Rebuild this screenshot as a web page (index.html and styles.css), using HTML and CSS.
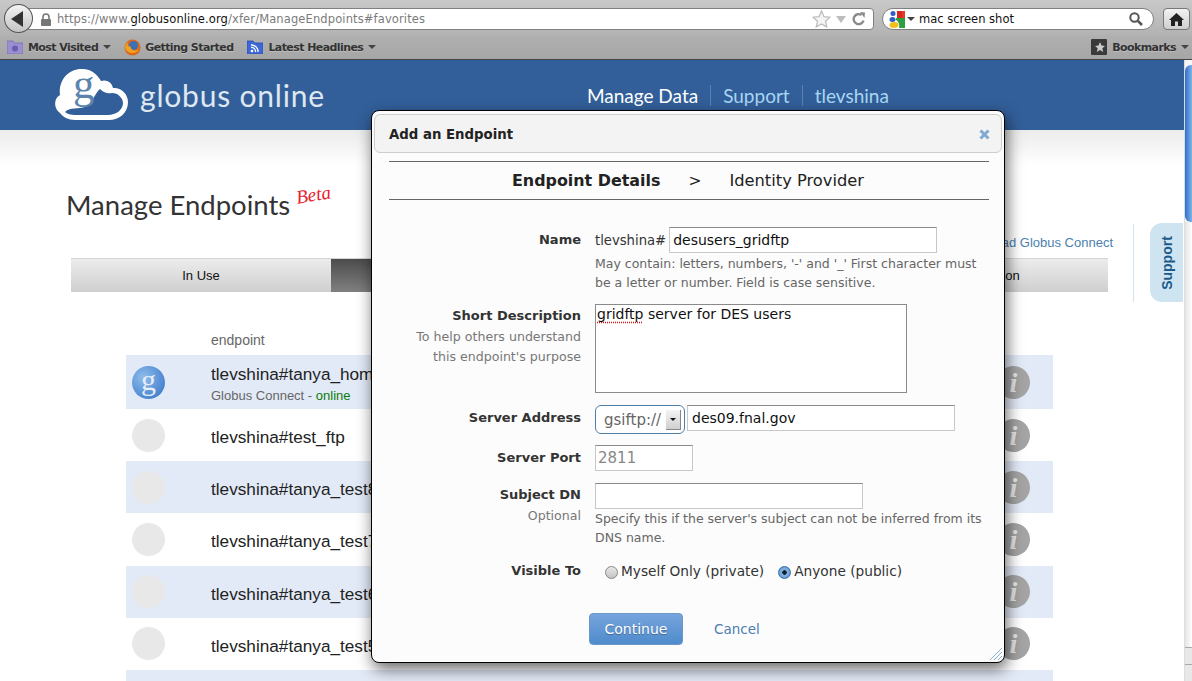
FILE: index.html
```html
<!DOCTYPE html>
<html lang="en">
<head>
    <meta charset="UTF-8">
    <meta name="viewport" content="width=device-width, initial-scale=1.0">
    <title>Manage Endpoints</title>
    <link rel="stylesheet" href="styles.css">
</head>
<body>
    <div class="toolbar">
        <button class="back-button" type="button" aria-label="Back">
            <svg width="16" height="18" viewBox="0 0 16 18"><path d="M14 1 L2 9 L14 17 Z" fill="#333"/></svg>
        </button>
        <div class="url-bar">
            <svg class="lock" width="12" height="13" viewBox="0 0 12 13"><path d="M3 6 V4 a3 3 0 0 1 6 0 V6" fill="none" stroke="#777" stroke-width="1.6"/><rect x="1" y="6" width="10" height="7" rx="1" fill="#777"/></svg>
            <span class="url"><span class="url-dim">https://www.</span>globusonline.org<span class="url-dim">/xfer/ManageEndpoints#favorites</span></span>
            <svg class="url-star" width="19" height="18" viewBox="0 0 19 18"><path d="M9.5 1 L12 6.6 L18 7.2 L13.5 11.2 L14.8 17 L9.5 14 L4.2 17 L5.5 11.2 L1 7.2 L7 6.6 Z" fill="#f4f4f4" stroke="#bbb" stroke-width="1.2"/></svg>
            <span class="url-drop"></span>
            <svg class="reload" width="14" height="14" viewBox="0 0 14 14"><path d="M11.5 8.5 A5 5 0 1 1 9.5 3" fill="none" stroke="#8a8a8a" stroke-width="2.4"/><path d="M8 0 L13 0.5 L12.5 6 Z" fill="#8a8a8a"/></svg>
        </div>
        <div class="search-bar">
            <svg width="16" height="17" viewBox="0 0 16 17"><path d="M8 0 H13 V7 H8 Z" fill="#d6281f"/><path d="M13 0 H16 V7 H13 Z" fill="#e23a2e"/><path d="M7 7 H16 V17 H10 C11 13 9 10 7 9 Z" fill="#2f9e3f"/><circle cx="4" cy="2.5" r="2.5" fill="#2a5fc4"/><ellipse cx="3.5" cy="8.5" rx="3" ry="2.5" fill="#2a5fc4"/><ellipse cx="5" cy="14" rx="4.5" ry="3" fill="#f2c01e"/></svg>
            <span class="caret caret-search"></span>
            <span class="search-text">mac screen shot</span>
            <svg class="magnifier" width="14" height="14" viewBox="0 0 14 14"><circle cx="5.5" cy="5.5" r="4.2" fill="none" stroke="#555" stroke-width="2"/><path d="M8.8 8.8 L13 13" stroke="#555" stroke-width="2.6"/></svg>
        </div>
        <button class="home-button" type="button" aria-label="Home">
            <svg width="15" height="13" viewBox="0 0 15 13"><path d="M7.5 0 L15 7 H13 V13 H9 V8.5 H6 V13 H2 V7 H0 Z" fill="#222"/></svg>
        </button>
    </div>

    <div class="bookmarks">
        <span class="bookmark">
            <svg width="16" height="14" viewBox="0 0 16 14"><path d="M0 1 H6 L7.5 3 H16 V14 H0 Z" fill="#9b8fd0" stroke="#7a6db4" stroke-width=".8"/><circle cx="8" cy="8.5" r="3" fill="#6a5cb0"/></svg>
            Most Visited <span class="caret"></span>
        </span>
        <span class="bookmark bookmark-ff">
            <svg width="17" height="17" viewBox="0 0 17 17"><circle cx="8.5" cy="8.5" r="8" fill="#d9691c"/><circle cx="9.5" cy="6.5" r="4.5" fill="#3d6fb4"/><path d="M1 9 C3 15 12 16 15.5 10 C12 12.5 7 12 6.5 7.5 C4 8 3 7 4 3 C2 4.5 1 6.5 1 9 Z" fill="#f2a21f"/></svg>
            Getting Started
        </span>
        <span class="bookmark bookmark-news">
            <svg width="16" height="14" viewBox="0 0 16 14"><path d="M0 1 H6 L7.5 3 H16 V14 H0 Z" fill="#3e68d8" stroke="#2c4fb0" stroke-width=".8"/><circle cx="5" cy="11" r="1.3" fill="#fff"/><path d="M4 7.5 A4 4 0 0 1 8.5 12 M4 5 A6.5 6.5 0 0 1 11 12" fill="none" stroke="#fff" stroke-width="1.3"/></svg>
            Latest Headlines <span class="caret"></span>
        </span>
        <span class="bookmark bookmark-right">
            <svg width="16" height="16" viewBox="0 0 16 16"><rect width="16" height="16" rx="1" fill="#3a3a3a"/><path d="M9 3 L10.5 6.5 L14 7 L11.3 9.3 L12.2 13 L9 11 L5.8 13 L6.7 9.3 L4 7 L7.5 6.5 Z" fill="#ccc"/></svg>
            Bookmarks <span class="caret"></span>
        </span>
    </div>

    <div class="viewport">
        <div class="page">
            <header class="site-header">
                <a class="logo">
                    <svg class="logo-mark" width="74" height="62" viewBox="0 -8 74 62">
                        <path d="M5 45 C-2 40 -1 30 5 27 C3 12 14 0 28 1 C36 1 42 6 46 13 C51 11 57 14 58 20 C65 19 73 25 73 34 C73 45 64 52 54 52 H20 C13 52 8 49 5 45 Z" fill="#fff"/>
                        <path d="M10 44 C14 39 24 41 30 39 C38 36 39 26 45 21 C49 25 53 26 57 25 C63 25 68 30 68 35 C68 42 61 47 53 47 H20 C16 47 12 46 10 44 Z" fill="#325f9a"/>
                        <text class="logo-g" x="18" y="30">g</text>
                    </svg>
                    <span class="logo-text">globus online</span>
                </a>
                <nav class="site-nav">
                    <a class="nav-link nav-current">Manage Data</a>
                    <a class="nav-link">Support</a>
                    <a class="nav-link">tlevshina</a>
                </nav>
            </header>

            <main class="content">
                <div class="title-row">
                    <h1 class="page-title">Manage Endpoints</h1>
                    <span class="beta">Beta</span>
                    <a class="connect-link">Download Globus Connect</a>
                </div>

                <div class="tabs">
                    <div class="tab tab-first">In Use</div>
                    <div class="tab tab-active"></div>
                    <div class="tab"></div>
                    <div class="tab">Administration</div>
                </div>

                <div class="endpoints">
                    <div class="endpoints-head">endpoint</div>
                    <div class="endpoint endpoint-first">
                        <span class="ep-icon ep-icon-on">g</span>
                        <div class="ep-text">
                            <div class="ep-name">tlevshina#tanya_home</div>
                            <div class="ep-sub">Globus Connect - <span class="online">online</span></div>
                        </div>
                        <span class="info">i</span>
                    </div>
                    <div class="endpoint">
                        <span class="ep-icon"></span>
                        <div class="ep-text"><div class="ep-name">tlevshina#test_ftp</div></div>
                        <span class="info">i</span>
                    </div>
                    <div class="endpoint">
                        <span class="ep-icon"></span>
                        <div class="ep-text"><div class="ep-name">tlevshina#tanya_test8</div></div>
                        <span class="info">i</span>
                    </div>
                    <div class="endpoint">
                        <span class="ep-icon"></span>
                        <div class="ep-text"><div class="ep-name">tlevshina#tanya_test7</div></div>
                        <span class="info">i</span>
                    </div>
                    <div class="endpoint">
                        <span class="ep-icon"></span>
                        <div class="ep-text"><div class="ep-name">tlevshina#tanya_test6</div></div>
                        <span class="info">i</span>
                    </div>
                    <div class="endpoint">
                        <span class="ep-icon"></span>
                        <div class="ep-text"><div class="ep-name">tlevshina#tanya_test5</div></div>
                        <span class="info">i</span>
                    </div>
                    <div class="endpoint endpoint-cut"></div>
                </div>
            </main>

            <div class="support-line"></div>
            <div class="support-tab"><span>Support</span></div>
        </div>

        <div class="scrollbar">
            <div class="scroll-thumb"></div>
            <div class="scroll-track"></div>
            <div class="scroll-arrow scroll-up"></div>
            <div class="scroll-arrow scroll-down"></div>
        </div>
    </div>

    <div class="modal">
        <div class="modal-title">
            <span>Add an Endpoint</span>
            <svg class="modal-close" width="11" height="11" viewBox="0 0 11 11"><path d="M1.5 1.5 L9.5 9.5 M9.5 1.5 L1.5 9.5" stroke="#7fa9cf" stroke-width="3"/></svg>
        </div>
        <div class="steps">
            <span class="step-current">Endpoint Details</span>
            <span class="step-sep">&gt;</span>
            <span class="step-next">Identity Provider</span>
        </div>
        <form class="endpoint-form">
            <div class="form-row">
                <div class="form-label label-low"><label for="ep-name">Name</label></div>
                <div class="form-field">
                    <div class="name-line">
                        <span class="name-prefix">tlevshina#</span>
                        <input class="text-input input-name" id="ep-name" type="text" value="desusers_gridftp">
                    </div>
                    <p class="hint">May contain: letters, numbers, '-' and '_' First character must<br>be a letter or number. Field is case sensitive.</p>
                </div>
            </div>
            <div class="form-row">
                <div class="form-label">
                    <label>Short Description</label>
                    <small>To help others understand<br>this endpoint's purpose</small>
                </div>
                <div class="form-field">
                    <div class="text-area"><span class="misspelled">gridftp</span> server for DES users</div>
                </div>
            </div>
            <div class="form-row form-row-address">
                <div class="form-label label-low"><label>Server Address</label></div>
                <div class="form-field address-line">
                    <div class="select-box">gsiftp://<span class="select-arrow"></span></div>
                    <input class="text-input input-host" type="text" value="des09.fnal.gov">
                </div>
            </div>
            <div class="form-row">
                <div class="form-label label-low"><label>Server Port</label></div>
                <div class="form-field"><input class="text-input input-port" type="text" value="2811"></div>
            </div>
            <div class="form-row form-row-subject">
                <div class="form-label">
                    <label>Subject DN</label>
                    <small>Optional</small>
                </div>
                <div class="form-field">
                    <input class="text-input input-subject" type="text">
                    <p class="hint hint-tight">Specify this if the server's subject can not be inferred from its<br>DNS name.</p>
                </div>
            </div>
            <div class="form-row form-row-visible">
                <div class="form-label"><label>Visible To</label></div>
                <div class="form-field radios">
                    <span class="radio-item"><span class="radio"></span>Myself Only (private)</span>
                    <span class="radio-item"><span class="radio radio-checked"></span>Anyone (public)</span>
                </div>
            </div>
            <div class="form-actions">
                <button class="continue" type="button">Continue</button>
                <a class="cancel">Cancel</a>
            </div>
        </form>
        <svg class="resize-grip" width="14" height="14" viewBox="0 0 14 14"><path d="M1 13 L13 1 M5 13 L13 5 M9 13 L13 9" stroke="#8fb0cc" stroke-width="1"/></svg>
    </div>
</body>
</html>
```

FILE: styles.css
```css
html, body {
    height: 100%;
    margin: 0;
    overflow: hidden;
    background: #fff;
}
body {
    font-family: "Liberation Sans", Arial, sans-serif;
    display: flex;
    flex-direction: column;
}
h1, p {
    margin: 0;
}

/* browser chrome */
.toolbar {
    height: 36px;
    flex: none;
    display: flex;
    align-items: flex-start;
    padding: 8px 2px 0 4px;
    box-sizing: border-box;
    background: linear-gradient(#c9c9c9, #b2b2b2);
}
.back-button {
    width: 29px;
    height: 29px;
    margin-top: -4px;
    padding: 0 2px 0 0;
    border: 1px solid #555;
    border-radius: 50%;
    background: linear-gradient(#f4f4f4, #c4c4c4);
    display: flex;
    align-items: center;
    justify-content: center;
    position: relative;
    z-index: 1;
}
.url-bar {
    width: 851px;
    height: 22px;
    margin-left: -7px;
    padding: 0 7px 0 13px;
    box-sizing: border-box;
    display: flex;
    align-items: center;
    background: #fff;
    border: 1px solid #808080;
    border-radius: 0 4px 4px 0;
}
.lock {
    flex: none;
    margin-right: 5px;
}
.url {
    font-family: "DejaVu Sans", sans-serif;
    font-size: 11.5px;
    letter-spacing: .12px;
    color: #111;
    flex: 1;
    white-space: nowrap;
}
.url-dim {
    color: #7c7c7c;
}
.url-star {
    margin-right: 5px;
}
.url-drop {
    width: 0;
    height: 0;
    border-left: 5px solid transparent;
    border-right: 5px solid transparent;
    border-top: 7px solid #bdbdbd;
    margin-right: 6px;
}
.search-bar {
    width: 273px;
    height: 22px;
    margin-left: 8px;
    padding: 0 10px 0 6px;
    box-sizing: border-box;
    display: flex;
    align-items: center;
    background: #fff;
    border: 1px solid #808080;
    border-radius: 11px;
}
.search-text {
    flex: 1;
    font-family: "DejaVu Sans", sans-serif;
    font-size: 11.5px;
    color: #111;
    margin-left: 4px;
}
.caret {
    display: inline-block;
    width: 0;
    height: 0;
    border-left: 4px solid transparent;
    border-right: 4px solid transparent;
    border-top: 4px solid #444;
    vertical-align: middle;
    margin-left: 5px;
}
.caret-search {
    margin-left: 2px;
}
.home-button {
    width: 27px;
    height: 22px;
    margin-left: 9px;
    padding: 0;
    border: 1px solid #777;
    border-radius: 4px;
    background: linear-gradient(#f2f2f2, #cfcfcf);
    display: flex;
    align-items: center;
    justify-content: center;
}
.bookmarks {
    height: 24px;
    flex: none;
    display: flex;
    align-items: center;
    padding: 0 3px 1px 7px;
    box-sizing: border-box;
    background: linear-gradient(#b0b0b0, #a6a6a6);
    border-bottom: 1px solid #444;
    font-family: "DejaVu Sans", sans-serif;
    font-size: 11px;
    font-weight: 700;
    color: #333;
    text-shadow: 0 1px 0 rgba(255, 255, 255, .25);
}
.bookmark {
    display: flex;
    align-items: center;
    gap: 5px;
    white-space: nowrap;
    letter-spacing: -.58px;
}
.bookmark .caret {
    margin-left: 0;
}
.bookmark-ff {
    margin-left: 13px;
    gap: 4px;
}
.bookmark-news {
    margin-left: 14px;
}
.bookmark-right {
    margin-left: auto;
}

/* page */
.viewport {
    flex: 1;
    min-height: 0;
    display: flex;
}
.page {
    flex: 1;
    min-width: 0;
    position: relative;
    overflow: hidden;
}
.site-header {
    height: 70px;
    background: #325f9a;
    display: flex;
    align-items: center;
    padding-left: 55px;
    box-sizing: border-box;
}
.logo {
    display: flex;
    align-items: center;
    gap: 11px;
}
.logo-mark {
    margin-bottom: 8px;
}
.logo-g {
    font-family: "Liberation Serif", serif;
    font-size: 43px;
    fill: #5c85ad;
}
.logo-text {
    font-family: Lato, sans-serif;
    font-size: 30px;
    letter-spacing: .8px;
    color: #dfe8f1;
}
.site-nav {
    margin-left: 262px;
    display: flex;
}
.nav-link {
    font-family: Lato, sans-serif;
    font-size: 19px;
    color: #a9d6f2;
    padding: 0 12px;
    border-left: 1px solid #5a82b3;
    line-height: 21px;
}
.nav-current {
    color: #fff;
    border-left: none;
    padding-left: 0;
}
.content {
    padding: 60px 76px 0 71px;
    background: linear-gradient(#ececec, #fff 36px);
}
.title-row {
    height: 60px;
    display: flex;
    align-items: flex-start;
}
.page-title {
    font-family: Lato, sans-serif;
    font-size: 27.5px;
    font-weight: 400;
    line-height: 30px;
    color: #333;
    margin-left: -5px;
}
.beta {
    font-family: "Liberation Serif", serif;
    font-style: italic;
    font-size: 19px;
    line-height: 20px;
    color: #e8202e;
    margin: -5px 0 0 6px;
    transform: rotate(-9deg);
}
.connect-link {
    margin: auto -5px -1px auto;
    font-size: 13px;
    line-height: 16px;
    color: #4b7fae;
}
.tabs {
    margin-top: 8px;
    display: flex;
    height: 34px;
}
.tab {
    flex: 1;
    display: flex;
    align-items: center;
    justify-content: center;
    font-size: 13px;
    color: #111;
    background: linear-gradient(#ececec, #cfcfcf);
    border-top: 1px solid #d4d4d4;
    box-sizing: border-box;
}
.tab-first {
    flex: none;
    width: 260px;
}
.tab-active {
    background: linear-gradient(#4c4c4c, #808080);
    color: #fff;
}
.endpoints {
    margin: 38px 55px 0 55px;
}
.endpoints-head {
    padding-left: 85px;
    font-size: 14px;
    line-height: 20px;
    color: #666;
    margin-bottom: 5px;
}
.endpoint {
    height: 52.2px;
    display: flex;
    align-items: center;
    padding: 0 23px 0 6px;
}
.endpoint:nth-child(even) {
    background: #e3eaf7;
}
.endpoint-first {
    height: 54px;
}
.ep-icon {
    width: 33px;
    height: 33px;
    flex: none;
    border-radius: 50%;
    background: #e8e8e8;
}
.ep-icon-on {
    background: radial-gradient(circle at 35% 35%, #8fbcec, #2f70c4);
    color: #e6eef8;
    font-family: "Liberation Serif", serif;
    font-size: 30px;
    line-height: 27px;
    text-align: center;
}
.ep-text {
    flex: 1;
    margin-left: 46px;
    padding-top: 4px;
}
.ep-name {
    font-size: 17.2px;
    line-height: 20px;
    color: #222;
}
.ep-sub {
    font-size: 13px;
    line-height: 16px;
    margin-top: 4px;
    color: #666;
}
.online {
    color: #0b7a0b;
}
.info {
    width: 33px;
    height: 33px;
    flex: none;
    border-radius: 50%;
    background: #a4a4a4;
    color: #e8e8e8;
    font-family: "Liberation Serif", serif;
    font-style: italic;
    font-weight: 700;
    font-size: 28px;
    line-height: 33px;
    text-align: center;
}
.support-line {
    position: absolute;
    left: 1133px;
    top: 164px;
    width: 1px;
    height: 78px;
    background: #d5e3ee;
}
.support-tab {
    position: absolute;
    left: 1150px;
    top: 163px;
    width: 33px;
    height: 79px;
    background: #cfe4f1;
    border-radius: 12px 0 0 12px;
    display: flex;
    align-items: center;
    justify-content: center;
}
.support-tab span {
    transform: rotate(-90deg);
    font-size: 14px;
    font-weight: 700;
    color: #1d5a8a;
}
.scrollbar {
    width: 8px;
    flex: none;
    display: flex;
    flex-direction: column;
    background: #f6f6f6;
    border-left: 1px solid #ddd;
    box-sizing: border-box;
    padding-top: 5px;
}
.scroll-thumb {
    height: 157px;
    border-radius: 6px 0 0 6px;
    background: linear-gradient(90deg, #2f6fc8, #7fb2ea);
}
.scroll-track {
    flex: 1;
    background: linear-gradient(90deg, #e4e4e4, #fff);
}
.scroll-arrow {
    height: 17px;
    background: #e8e8e8;
    border-top: 1px solid #aaa;
    box-sizing: border-box;
}

/* add endpoint dialog */
.modal {
    position: absolute;
    left: 371px;
    top: 110px;
    width: 634px;
    height: 553px;
    box-sizing: border-box;
    background: #fcfcfc;
    border: 1px solid #000;
    border-radius: 8px;
    box-shadow: 2px 6px 16px rgba(0, 0, 0, .6);
    font-family: "DejaVu Sans", sans-serif;
    padding-top: 3px;
}
.modal-title {
    height: 39px;
    margin: 0 2px;
    padding: 1px 11px 0 14px;
    box-sizing: border-box;
    display: flex;
    align-items: center;
    justify-content: space-between;
    background: #f3f3f3;
    border: 1px solid #cdcdcd;
    border-radius: 6px;
    font-size: 13.3px;
    font-weight: 700;
    color: #222;
}
.steps {
    height: 39px;
    margin: 8px 15px 0 17px;
    padding-right: 2px;
    box-sizing: border-box;
    border-top: 1px solid #666;
    border-bottom: 1px solid #666;
    display: flex;
    align-items: center;
    justify-content: center;
    font-size: 16.3px;
    color: #222;
}
.step-current {
    font-weight: 700;
    font-size: 15.9px;
}
.step-sep {
    margin: 0 28px;
    font-size: 15.5px;
}
.endpoint-form {
    padding: 27px 14px 0 17px;
}
.form-row {
    display: flex;
    margin-bottom: 12px;
}
.form-label {
    width: 192px;
    flex: none;
    text-align: right;
    margin-right: 14px;
}
.label-low {
    padding-top: 1px;
}
.form-label label {
    display: block;
    font-size: 13px;
    font-weight: 700;
    line-height: 24px;
    color: #333;
}
.form-label small {
    display: block;
    margin-top: -1px;
    font-size: 12.6px;
    line-height: 20px;
    color: #777;
}
.form-field {
    flex: 1;
    min-width: 0;
}
.name-line {
    display: flex;
    align-items: center;
}
.name-prefix {
    font-size: 13.2px;
    color: #333;
    margin-right: 3px;
}
.text-input {
    display: block;
    height: 26px;
    box-sizing: border-box;
    margin: 0;
    padding: 0 4px;
    background: #fff;
    border: 1px solid #c8c8c8;
    border-top-color: #8a8a8a;
    border-radius: 0;
    font-family: "DejaVu Sans", sans-serif;
    font-size: 14px;
    color: #111;
}
.input-name {
    width: 268px;
    padding-left: 3px;
}
.input-host {
    width: 268px;
    margin-left: 2px;
}
.input-port {
    width: 98px;
    padding-left: 2px;
    font-size: 15px;
    color: #888;
}
.input-subject {
    width: 268px;
}
.hint {
    font-size: 12.5px;
    line-height: 19px;
    color: #666;
    margin-top: 1px;
    white-space: nowrap;
}
.hint-tight {
    margin-top: 0;
}
.text-area {
    width: 312px;
    height: 89px;
    box-sizing: border-box;
    padding: 1px 1px;
    background: #fff;
    border: 1px solid #8a8a8a;
    font-size: 14px;
    line-height: 16px;
    color: #111;
}
.misspelled {
    text-decoration: underline dotted #e01010;
    text-underline-offset: 3px;
}
.form-row-address {
    margin-bottom: 11px;
}
.form-row-subject {
    margin-bottom: 13px;
}
.address-line {
    display: flex;
    align-items: flex-start;
}
.select-box {
    width: 90px;
    height: 29px;
    box-sizing: border-box;
    padding-left: 8px;
    display: flex;
    align-items: center;
    justify-content: space-between;
    border: 1px solid #4f7fa8;
    border-radius: 6px;
    background: #fff;
    font-size: 15px;
    color: #666;
}
.select-arrow {
    width: 14px;
    height: 19px;
    margin-right: 3px;
    background: linear-gradient(#f4f4f4, #cfcfcf);
    border-right: 1px solid #888;
    border-bottom: 1px solid #888;
    position: relative;
}
.select-arrow::after {
    content: "";
    position: absolute;
    left: 4px;
    top: 8px;
    border-left: 3px solid transparent;
    border-right: 3px solid transparent;
    border-top: 3px solid #111;
}
.form-row-visible {
    margin-top: -1px;
}
.radios {
    display: flex;
    align-items: center;
    padding-left: 10px;
    gap: 14px;
    font-size: 13.7px;
    color: #333;
}
.radio-item {
    display: flex;
    align-items: center;
    gap: 3px;
}
.radio {
    width: 13px;
    height: 13px;
    box-sizing: border-box;
    border-radius: 50%;
    border: 1px solid #888;
    background: linear-gradient(#e8e8e8, #c4c4c4);
    margin-top: 3px;
}
.radio-checked {
    border-color: #3c6ea3;
    background: radial-gradient(circle, #123 0 2px, #8ab8e6 2.5px, #4a86c8);
}
.form-actions {
    display: flex;
    align-items: center;
    padding-left: 200px;
    margin-top: 30px;
}
.continue {
    width: 94px;
    height: 32px;
    padding: 0;
    border: 1px solid #6c98c8;
    border-radius: 4px;
    background: linear-gradient(#76a4dc, #4f8bcc);
    font-family: "DejaVu Sans", sans-serif;
    font-size: 14px;
    color: #fff;
    text-shadow: 0 1px 1px rgba(0, 0, 0, .3);
}
.cancel {
    margin-left: 31px;
    font-size: 13.5px;
    color: #4b7fae;
}
.resize-grip {
    position: absolute;
    right: 1px;
    bottom: 1px;
}
```
